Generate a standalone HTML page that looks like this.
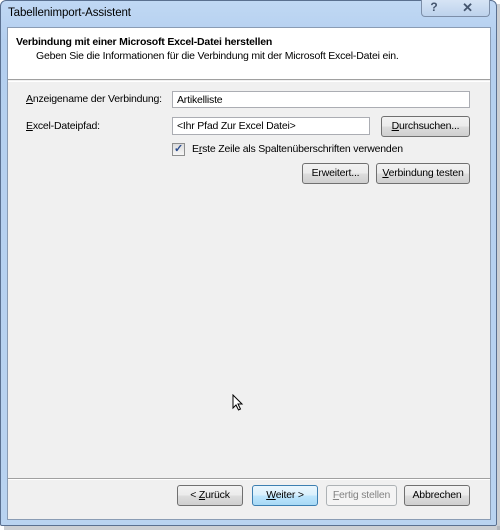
<!DOCTYPE html><html><head><style>
*{margin:0;padding:0;box-sizing:border-box}
body{width:500px;height:530px;background:#fff;position:relative;overflow:hidden;font-family:"Liberation Sans",sans-serif;font-size:10.5px;letter-spacing:-0.2px;color:#000}
.a{position:absolute;white-space:nowrap}
.btn{position:absolute;border:1px solid #707070;border-radius:3px;background:linear-gradient(#f2f2f2 0,#ebebeb 50%,#dddddd 51%,#cfcfcf 100%);text-align:center;line-height:19px}
.inp{position:absolute;border:1px solid #abadb3;background:#fff;padding-left:4px;line-height:16px}
u{text-decoration:underline}
</style></head><body>
<div class="a" style="left:0;top:0;width:497px;height:526px;background:linear-gradient(#c0d8f4,#b4cfef 40px,#b9d3f0);border:1px solid #5a7090;border-radius:6px 6px 2px 2px"></div>
<div class="a" style="left:497px;top:4px;width:3px;height:526px;background:#9aa0a8;opacity:.5"></div>
<div class="a" style="left:4px;top:526px;width:496px;height:4px;background:#9aa0a8;opacity:.5"></div>
<div class="a" style="left:8px;top:7px;font-size:11.5px;letter-spacing:-0.1px">Tabellenimport-Assistent</div>
<div class="a" style="left:421px;top:0;width:26px;height:17px;border:1px solid #7c8ea8;border-top:none;border-radius:0 0 0 4px;background:linear-gradient(#d6e4f5,#bdd2ec);text-align:center;color:#44556e;font-weight:bold;font-size:12px;line-height:15px">?</div>
<div class="a" style="left:446px;top:0;width:44px;height:17px;border:1px solid #7c8ea8;border-top:none;border-left:none;border-radius:0 0 4px 0;background:linear-gradient(#d6e4f5,#bdd2ec);text-align:center;color:#44556e;font-weight:bold;font-size:13px;line-height:15px">✕</div>
<div class="a" style="left:7px;top:27px;width:484px;height:493px;background:#f0f0f0;border:1px solid #8a9cb4"></div>
<div class="a" style="left:8px;top:28px;width:482px;height:52px;background:#fff;border-bottom:1px solid #a0a0a0"></div>
<div class="a" style="left:8px;top:81px;width:482px;height:1px;background:#fff"></div>
<div class="a" style="left:16px;top:36px;font-weight:bold">Verbindung mit einer Microsoft Excel-Datei herstellen</div>
<div class="a" style="left:36px;top:50px">Geben Sie die Informationen für die Verbindung mit der Microsoft Excel-Datei ein.</div>
<div class="a" style="left:26px;top:93px"><u>A</u>nzeigename der Verbindung:</div>
<div class="inp" style="left:172px;top:91px;width:298px;height:17px">Artikelliste</div>
<div class="a" style="left:26px;top:120px"><u>E</u>xcel-Dateipfad:</div>
<div class="inp" style="left:172px;top:117px;width:198px;height:18px;line-height:16px">&lt;Ihr Pfad Zur Excel Datei&gt;</div>
<div class="btn" style="left:381px;top:116px;width:89px;height:21px"><u>D</u>urchsuchen...</div>
<div class="a" style="left:172px;top:143px;width:13px;height:13px;border:1px solid #8e8f8f;background:linear-gradient(#dcdcdc,#f6f6f6);color:#2a4b8d;font-size:11px;line-height:11px;text-align:center;font-weight:bold">✓</div>
<div class="a" style="left:192px;top:143px">E<u>r</u>ste Zeile als Spaltenüberschriften verwenden</div>
<div class="btn" style="left:302px;top:163px;width:67px;height:21px">Erweitert...</div>
<div class="btn" style="left:376px;top:163px;width:94px;height:21px"><u>V</u>erbindung testen</div>
<svg class="a" style="left:232px;top:394px" width="12" height="18" viewBox="0 0 12 18"><path d="M1 1 L1 14 L4 11 L6.5 16 L8.5 15 L6 10 L10 10 Z" fill="#fff" stroke="#000" stroke-width="1"/></svg>
<div class="a" style="left:8px;top:478px;width:482px;height:1px;background:#a0a0a0"></div>
<div class="a" style="left:8px;top:479px;width:482px;height:1px;background:#fff"></div>
<div class="btn" style="left:177px;top:485px;width:66px;height:21px">&lt; <u>Z</u>urück</div>
<div class="btn" style="left:252px;top:485px;width:66px;height:21px;border-color:#3c7fb1;background:linear-gradient(#eaf6fd,#d9f0fc 50%,#bee6fd 51%,#a7d9f5)"><u>W</u>eiter &gt;</div>
<div class="btn" style="left:326px;top:485px;width:71px;height:21px;border-color:#adb2b5;background:#f4f4f4;color:#838383"><u>F</u>ertig stellen</div>
<div class="btn" style="left:404px;top:485px;width:66px;height:21px">Abbrechen</div>
</body></html>
